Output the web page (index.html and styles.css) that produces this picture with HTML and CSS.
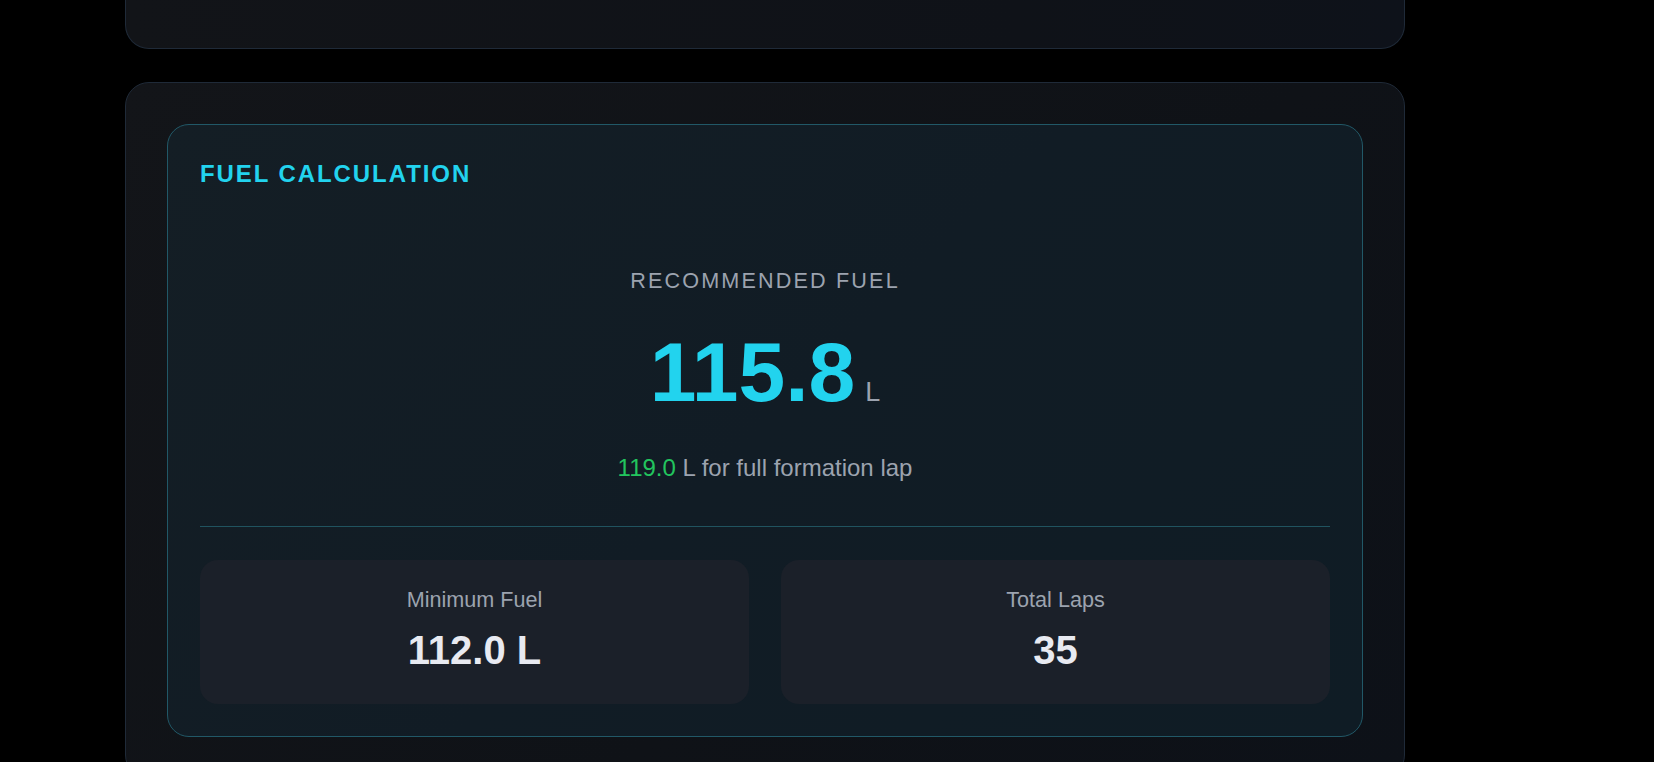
FILE: index.html
```html
<!DOCTYPE html>
<html lang="en">
	<head>
		<meta charset="utf-8">
		<title>Fuel Calculator</title>
		<link rel="stylesheet" href="styles.css">
	</head>
	<body>

<div class="page">
	<div class="card card-top"></div>

	<div class="card">
		<div class="fuel">
			<h2 class="fuel-title">Fuel Calculation</h2>

			<div class="recommended">
				<div class="rec-label">Recommended Fuel</div>
				<div class="rec-value">115.8<span class="rec-unit">L</span></div>
				<div class="rec-note"><span class="green">119.0</span> L for full formation lap</div>
			</div>

			<div class="stats">
				<div class="stat">
					<div class="stat-label">Minimum Fuel</div>
					<div class="stat-value">112.0 L</div>
				</div>
				<div class="stat">
					<div class="stat-label">Total Laps</div>
					<div class="stat-value">35</div>
				</div>
			</div>
		</div>
	</div>
</div>

	</body>
</html>
```

FILE: styles.css
```css
* { box-sizing: border-box; }

html, body {
	height: 100%;
}

body {
	margin: 0;
	overflow: hidden;
	background: #000;
	color: #e5e7eb;
	font-family: "Liberation Sans", Arial, Helvetica, sans-serif;
}

.page {
	width: 1280px;
	margin-left: 125px;
}

.card {
	border: 1px solid #1f2a38;
	border-radius: 24px;
	padding: 41px;
	background: linear-gradient(135deg, #131519 0%, #0f1217 60%, #0d1118 100%);
}

.card-top {
	height: 49px;
	padding: 0;
	border-top: none;
	border-radius: 0 0 24px 24px;
	margin-bottom: 33px;
	background: linear-gradient(90deg, #121418 0%, #0f1218 70%, #0e121a 100%);
}

.fuel {
	border: 1px solid #215867;
	border-radius: 22px;
	padding: 33px 32px 32px;
	background: linear-gradient(135deg, #141e25 0%, #111c25 50%, #0f1c25 100%);
}

.fuel-title {
	margin: 0;
	font-size: 24px;
	line-height: 32px;
	font-weight: bold;
	letter-spacing: 0.08em;
	text-transform: uppercase;
	color: #22d3ee;
}

.recommended {
	text-align: center;
	margin-top: 77px;
	padding-bottom: 42px;
	border-bottom: 1px solid #20535f;
}

.rec-label {
	font-size: 21.6px;
	line-height: 28px;
	letter-spacing: 0.1em;
	text-transform: uppercase;
	color: #9ca3af;
}

.rec-value {
	margin-top: 35px;
	font-size: 84px;
	line-height: 84px;
	font-weight: bold;
	color: #22d3ee;
}

.rec-unit {
	margin-left: 10px;
	font-size: 27px;
	font-weight: normal;
	color: #9ca3af;
}

.rec-note {
	margin-top: 18px;
	font-size: 24px;
	line-height: 32px;
	color: #9ca3af;
}

.green {
	color: #22c55e;
}

.stats {
	display: grid;
	grid-template-columns: 1fr 1fr;
	gap: 32px;
	margin-top: 33px;
}

.stat {
	height: 144px;
	padding-top: 26px;
	border-radius: 18px;
	background: #1b2029;
	text-align: center;
}

.stat-label {
	font-size: 21.6px;
	line-height: 28px;
	color: #9ca3af;
}

.stat-value {
	margin-top: 12px;
	font-size: 40px;
	line-height: 48px;
	font-weight: bold;
	color: #e8eaf1;
}
```
